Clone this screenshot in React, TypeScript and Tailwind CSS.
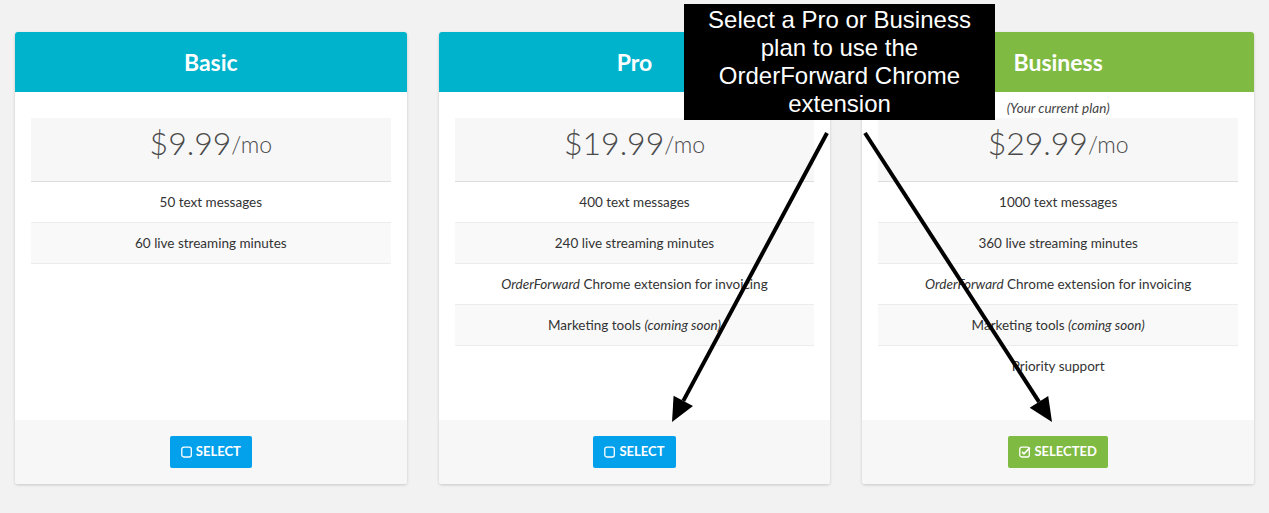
const plans = [
  {
    name: 'Basic',
    price: '$9.99',
    header: 'bg-[#00b3cd]',
    note: '',
    selected: false,
    features: [<>50 text messages</>, <>60 live streaming minutes</>],
  },
  {
    name: 'Pro',
    price: '$19.99',
    header: 'bg-[#00b3cd]',
    note: '',
    selected: false,
    features: [
      <>400 text messages</>,
      <>240 live streaming minutes</>,
      <><i>OrderForward</i> Chrome extension for invoicing</>,
      <>Marketing tools <i>(coming soon)</i></>,
    ],
  },
  {
    name: 'Business',
    price: '$29.99',
    header: 'bg-[#7fba42]',
    note: '(Your current plan)',
    selected: true,
    features: [
      <>1000 text messages</>,
      <>360 live streaming minutes</>,
      <><i>OrderForward</i> Chrome extension for invoicing</>,
      <>Marketing tools <i>(coming soon)</i></>,
      <>Priority support</>,
    ],
  },
];

function SquareIcon({ checked }: { checked: boolean }) {
  return (
    <svg width="12" height="12" viewBox="0 0 12 12" fill="none" stroke="white" strokeWidth="1.3">
      <rect x="0.8" y="1.2" width="9.5" height="9.8" rx="2" />
      {checked && <path d="M3 5.8 L5 7.8 L11 1.6" strokeWidth="1.7" />}
    </svg>
  );
}

function PlanCard({ plan }: { plan: (typeof plans)[number] }) {
  return (
    <div className="flex flex-col bg-white rounded-[3px] shadow-[0_1px_3px_rgba(0,0,0,0.18)] overflow-hidden">
      <div className={`${plan.header} h-[60px] flex items-center justify-center text-white text-[23px] font-bold`}>
        {plan.name}
      </div>
      <div className="flex-1 px-4 pb-[33px]">
        <div className="h-[26px] flex items-end justify-center text-[13.5px] italic text-[#444]">
          {plan.note}
        </div>
        <div className="h-[64px] bg-[#f7f7f7] border-b border-[#ddd] flex items-center justify-center pb-[14px] text-[#4a4a4a] font-light">
          <span className="text-[32px] leading-none">{plan.price}</span>
          <span className="text-[23px] leading-none mt-[4px]">/mo</span>
        </div>
        {plan.features.map((f, i) => (
          <div
            key={i}
            className={`h-[41px] flex items-center justify-center text-[13.5px] text-[#333] ${
              i < plan.features.length - 1 || i % 2 === 1 ? 'border-b border-[#ececec]' : ''
            } ${i % 2 === 1 ? 'bg-[#f9f9f9]' : ''}`}
          >
            <span>{f}</span>
          </div>
        ))}
      </div>
      <div className="h-[64px] bg-[#f7f7f7] flex items-center justify-center">
        <button
          className={`h-[32px] px-[11px] rounded-[2px] flex items-center gap-[3px] text-white text-[13px] font-bold ${
            plan.selected ? 'bg-[#7fba42]' : 'bg-[#03a0ec]'
          }`}
        >
          <SquareIcon checked={plan.selected} />
          {plan.selected ? 'SELECTED' : 'SELECT'}
        </button>
      </div>
    </div>
  );
}

export default function App() {
  return (
    <div className="relative w-[1269px] h-[513px] bg-[#f2f2f2] font-['Lato',sans-serif] overflow-hidden">
      <div className="grid grid-cols-3 gap-8 px-[15px] pt-[32px]">
        {plans.map((p) => (
          <PlanCard key={p.name} plan={p} />
        ))}
      </div>

      <div className="absolute left-[684px] top-[4px] w-[311px] h-[116px] bg-black text-white text-center text-[24px] leading-[28px] pt-[2px] font-['Liberation_Sans',Arial,sans-serif]">
        Select a Pro or Business
        <br />
        plan to use the
        <br />
        OrderForward Chrome
        <br />
        extension
      </div>

      <svg className="absolute inset-0 pointer-events-none" width="1269" height="513">
        <line x1="827" y1="133" x2="683.3" y2="400.9" stroke="black" strokeWidth="4" />
        <polygon points="672,422 693,406.1 673.6,395.7" fill="black" />
        <line x1="865" y1="133" x2="1039" y2="401.8" stroke="black" strokeWidth="4" />
        <polygon points="1052,422 1048.2,395.9 1029.7,407.8" fill="black" />
      </svg>
    </div>
  );
}
